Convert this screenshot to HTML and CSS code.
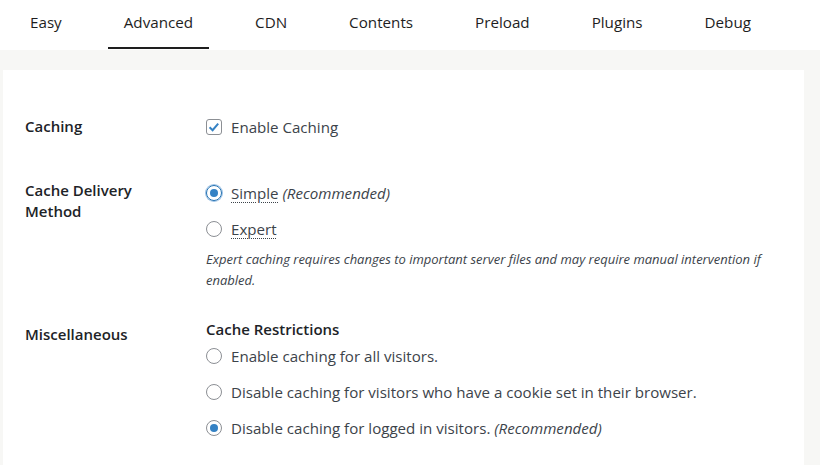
FILE: index.html
```html
<!DOCTYPE html>
<html lang="en">
<head>
<meta charset="utf-8">
<title>Settings</title>
<link rel="stylesheet" href="styles.css">
</head>
<body>
<nav class="tabs">
  <a class="tab">Easy</a>
  <a class="tab active">Advanced</a>
  <a class="tab">CDN</a>
  <a class="tab">Contents</a>
  <a class="tab">Preload</a>
  <a class="tab">Plugins</a>
  <a class="tab">Debug</a>
</nav>
<main class="panel">
  <section class="row row-caching">
    <div class="label">Caching</div>
    <div class="field">
      <div class="option"><span class="check"><svg viewBox="0 0 16 16" width="16" height="16"><path d="M3.6 8.3 L6.6 11.2 L12.2 4.6" fill="none" stroke="#3582c4" stroke-width="2"/></svg></span><span>Enable Caching</span></div>
    </div>
  </section>
  <section class="row row-method">
    <div class="label">Cache Delivery<br>Method</div>
    <div class="field">
      <div class="option"><span class="radio on focus"></span><span><span class="abbr">Simple</span> <em>(Recommended)</em></span></div>
      <div class="option"><span class="radio"></span><span class="abbr">Expert</span></div>
      <p class="desc">Expert caching requires changes to important server files and may require manual intervention if enabled.</p>
    </div>
  </section>
  <section class="row row-misc">
    <div class="label label-misc">Miscellaneous</div>
    <div class="field">
      <div class="heading">Cache Restrictions</div>
      <div class="option"><span class="radio"></span><span>Enable caching for all visitors.</span></div>
      <div class="option"><span class="radio"></span><span>Disable caching for visitors who have a cookie set in their browser.</span></div>
      <div class="option"><span class="radio on"></span><span>Disable caching for logged in visitors. <em>(Recommended)</em></span></div>
    </div>
  </section>
</main>
</body>
</html>
```
FILE: styles.css
```css
* { box-sizing: border-box; }
html, body { margin: 0; padding: 0; }
body {
  background: #f7f7f5;
  font-family: "Open Sans", "Noto Sans", sans-serif;
  color: #1d2327;
  width: 820px;
  height: 465px;
  overflow: hidden;
}
.tabs {
  display: flex;
  gap: 30px;
  height: 50px;
  padding-left: 14px;
  background: #ffffff;
}
.tab {
  display: block;
  padding: 11px 16px 0;
  height: 49px;
  font-size: 15.2px;
  line-height: 22px;
  color: #1e1e1e;
  border-bottom: 2px solid transparent;
}
.tab.active { border-bottom-color: #1e1e1e; }
.panel {
  margin: 20px 0 0 3px;
  width: 801px;
  height: 395px;
  background: #ffffff;
  padding: 46px 0 0 22px;
}
.row { display: flex; }
.label {
  width: 181px;
  flex: none;
  font-size: 15px;
  font-weight: 600;
  line-height: 21px;
  color: #1d2327;
}
.row-method { margin-top: 42px; }
.row-misc { margin-top: 27px; }
.label-misc { padding-top: 5px; line-height: 22px; }
.field { flex: 1; }
.option {
  display: flex;
  align-items: center;
  gap: 9px;
  height: 24px;
  font-size: 15.1px;
  color: #3c434a;
}
.row-caching .option { height: 22px; }
.row-method .option { margin-bottom: 12px; }
.row-method .option:first-child { margin-top: 1px; }
.row-misc .option + .option { margin-top: 12px; }
.check {
  width: 16px;
  height: 16px;
  border: 1px solid #8c8f94;
  border-radius: 3px;
  flex: none;
  display: flex;
  align-items: center;
  justify-content: center;
}
.check svg { display: block; margin: -1px; }
.radio {
  width: 16px;
  height: 16px;
  border: 1px solid #8c8f94;
  border-radius: 50%;
  flex: none;
  position: relative;
}
.radio.on::after {
  content: "";
  position: absolute;
  left: 3px; top: 3px;
  width: 8px; height: 8px;
  border-radius: 50%;
  background: #3582c4;
}
.radio.focus {
  border-color: #2271b1;
  box-shadow: 0 0 0 1px #9ec2e6;
}
.abbr {
  text-decoration: underline dotted;
  text-underline-offset: 3px;
  text-decoration-thickness: 1px;
}
em { font-style: italic; }
.desc {
  margin: -4px 0 0;
  font-size: 13px;
  font-style: italic;
  line-height: 21px;
  color: #3c434a;
  max-width: 570px;
}
.heading {
  font-size: 15px;
  font-weight: 600;
  line-height: 22px;
  color: #1d2327;
  margin-bottom: 4px;
}
```
